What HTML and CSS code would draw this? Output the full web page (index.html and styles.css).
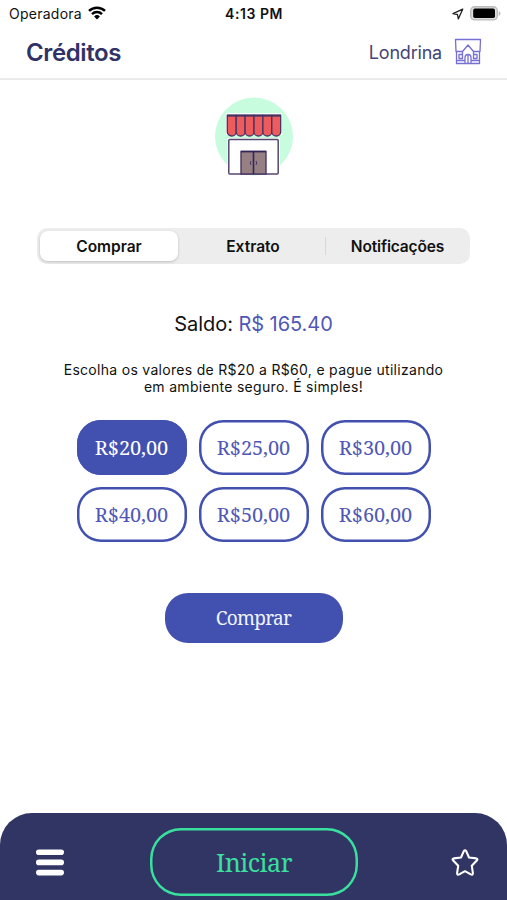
FILE: index.html
```html
<!DOCTYPE html>
<html lang="pt-BR">
<head>
<meta charset="utf-8">
<title>Créditos</title>
<link rel="stylesheet" href="styles.css">
</head>
<body>
<div class="status">
  <div class="carrier"><span>Operadora</span>
    <svg width="18" height="14" viewBox="0 0 18 14" fill="none" stroke="#000" stroke-width="2.5"><path d="M1 4.9a11.5 11.5 0 0 1 16 0M4 8.1a7.2 7.2 0 0 1 10 0"/><path d="M6.1 10.5a4.2 4.2 0 0 1 5.8 0L9 13.5z" fill="#000" stroke="none"/></svg>
  </div>
  <div class="clock">4:13 PM</div>
  <div class="indicators">
    <svg width="12" height="12" viewBox="0 0 12 12" fill="none" stroke="#222" stroke-width="1.3" stroke-linejoin="round"><path d="M10.7 1.2 1 5.7l4.5.8.8 4.4z"/></svg>
    <svg width="31" height="15" viewBox="0 0 31 15"><rect x=".7" y=".7" width="26.6" height="13.2" rx="4" fill="#ddd" stroke="#bbb" stroke-width="1.4"/><rect x="3.2" y="2.600" width="21.800" height="9.400" rx="1.800"/><path d="M28.700 5v5q1.800-.8 1.800-2.500T28.700 5" fill="#bbb"/></svg>
  </div>
</div>
<header class="header">
  <h1>Créditos</h1>
  <div class="place"><span>Londrina</span>
    <svg width="28" height="28" viewBox="0 0 28 28" fill="none" stroke="#766fd6" stroke-width="1.3" stroke-linejoin="round"><path d="M1.500 1.500h25l-.5 12h-6.500L14 7l-5.500 6.500H2zM2.500 13.500v12h23v-12M11 25.500v-6a3 3 0 0 1 6 0v6M14 17v8.500M5 16.500h3.500v4H5zM19.500 16.500H23v4h-3.500zM2.500 22.500H11M17 22.500h8.500M8.500 13.500V16M19.500 13.500V16"/></svg>
  </div>
</header>
<main class="main">
  <svg class="store" width="80" height="80" viewBox="0 0 80 80">
    <circle cx="40" cy="39.500" r="39" fill="#c8fcdf"/>
    <path d="M12 16h56v22H12z" fill="#fff"/>
    <g fill="#ee5b5c" stroke="#453363" stroke-width="1.300"><path d="M13.300 18.500h8.900v16.500a4.450 4 0 0 1-8.900 0z"/><path d="M22.200 18.500h8.900v16.500a4.450 4 0 0 1-8.900 0z"/><path d="M31.100 18.500H40v16.500a4.450 4 0 0 1-8.900 0z"/><path d="M40 18.500h8.900v16.500a4.450 4 0 0 1-8.900 0z"/><path d="M48.900 18.500h8.900v16.500a4.450 4 0 0 1-8.900 0z"/><path d="M57.800 18.500h8.900v16.500a4.450 4 0 0 1-8.900 0z"/></g>
    <path d="M13 18.500h54" stroke="#453363" stroke-width="2"/>
    <rect x="13.500" y="41" width="52.500" height="37" fill="#fff"/>
    <rect x="14.800" y="42.500" width="49.400" height="34.500" rx="1" fill="#fff" stroke="#57476f" stroke-width="1.500"/>
    <path d="M27 54.500h25V77H27z" fill="#968084" stroke="#493861" stroke-width="1.400"/><path d="M27 54.500h25M39.500 55v22" stroke="#342657" stroke-width="1.600"/><path d="M37 64q-1.400 2 0 4M42 64q1.400 2 0 4" fill="none" stroke="#493861"/>
  </svg>
  <nav class="tabs"><span class="tab active">Comprar</span><span class="tab middle">Extrato</span><span class="tab divided">Notificações</span></nav>
  <p class="balance">Saldo: <span>R$ 165.40</span></p>
  <p class="hint">Escolha os valores de R$20 a R$60, e pague utilizando<br>em ambiente seguro. É simples!</p>
  <div class="values">
    <button class="value selected">R$20,00</button><button class="value">R$25,00</button><button class="value">R$30,00</button>
    <button class="value">R$40,00</button><button class="value">R$50,00</button><button class="value">R$60,00</button>
  </div>
  <button class="buy">Comprar</button>
</main>
<footer class="bottom">
  <svg width="28" height="27" viewBox="0 0 28 27" stroke="#fff" stroke-width="5.600" stroke-linecap="round"><path d="M2.800 3.200h22.400M2.800 13.400h22.400M2.800 23.600h22.400"/></svg>
  <button class="start">Iniciar</button>
  <svg width="28" height="28" viewBox="0 0 28 28" fill="none" stroke="#fff" stroke-width="2.100" stroke-linejoin="round"><path d="M12.800 3.100Q14 1.400 15.200 3.100L18 9.500l7.200.9q2.100.5.600 2.100l-5 5.300 1.100 7.300q0 2.300-2.100 1.300L14 23.200l-5.800 3.200q-2.100 1-2.100-1.300l1.100-7.300-5-5.300q-1.500-1.600.6-2.100l7.200-.9z"/></svg>
</footer>
</body>
</html>
```
FILE: styles.css
```css
* { box-sizing: border-box; }
body { margin: 0; width: 507px; height: 900px; display: flex; flex-direction: column; overflow: hidden; background: #fff; color: #111; font-family: Inter, "Liberation Sans", sans-serif; }
button { padding: 0; font-family: "Noto Serif", "Droid Serif", "Liberation Serif", serif; display: flex; align-items: center; justify-content: center; }
svg { flex: none; }
.status { height: 28px; flex: none; display: grid; grid-template-columns: 1fr auto 1fr; align-items: center; padding: 0 6px 0 9px; font-size: 14px; line-height: 28px; }
.carrier { display: flex; align-items: center; gap: 6px; letter-spacing: .25px; }
.carrier svg { margin-top: -3px; }
.clock { font-weight: 600; letter-spacing: .55px; margin-right: 2px; }
.indicators { display: flex; align-items: center; justify-content: flex-end; gap: 6px; margin-top: -1px; }
.header { height: 52px; flex: none; display: flex; align-items: center; justify-content: space-between; padding: 0 25px 2px 26px; border-bottom: 2px solid #ebebeb; color: #303265; }
h1 { margin: 0; font-size: 24px; font-weight: 600; letter-spacing: -.4px; }
.place { display: flex; align-items: center; gap: 12px; font-size: 18px; letter-spacing: -.2px; color: #454575; }
.main { flex: 1; display: flex; flex-direction: column; align-items: center; }
.store { margin-top: 17px; }
.tabs { margin-top: 51px; width: 433px; height: 36px; padding: 3px; display: grid; grid-template-columns: 138px 147px 1fr; border-radius: 10px; background: #ededed; }
.tab { display: flex; align-items: center; justify-content: center; font-size: 15.500px; font-weight: 600; }
.active { background: #fff; border-radius: 8px; box-shadow: 0 1px 3px rgba(0,0,0,.2); }
.middle { padding-left: 3px; }
.divided { padding-left: 3px; letter-spacing: -.15px; background: linear-gradient(#d8d8d8, #d8d8d8) left center / 1px 18px no-repeat; }
.balance { margin: 47px 0 0; height: 26px; line-height: 26px; font-size: 20px; letter-spacing: -.05px; }
.balance span { color: #5058b7; }
.hint { margin: 24px 0 0; height: 35px; text-align: center; font-size: 14px; line-height: 17px; letter-spacing: .3px; }
.values { margin-top: 24px; display: grid; grid-template-columns: repeat(3, 110px); gap: 12px; }
.value { height: 55px; border: 0; box-shadow: inset 0 0 0 2.500px #4251af; border-radius: 24px; background: #fff; color: #5058b7; font-size: 20px; letter-spacing: -.1px; }
.selected { background: #4251af; color: #fff; }
.buy { margin-top: 51px; width: 178px; height: 50px; border: 0; border-radius: 23px; background: #4251af; color: #eef3ff; font-size: 19px; letter-spacing: -.7px; }
.bottom { height: 87px; flex: none; display: grid; grid-template-columns: 114px 208px 1fr; align-items: center; padding: 11px 28px 0 36px; border-radius: 32px 32px 0 0; background: #303564; }
.bottom svg:last-child { justify-self: end; }
.start { height: 68px; border: 0; box-shadow: inset 0 0 0 2.500px #3ae09d; border-radius: 31px; background: transparent; color: #3ae09d; font-size: 25px; letter-spacing: -.5px; padding-bottom: 1px; }
```
